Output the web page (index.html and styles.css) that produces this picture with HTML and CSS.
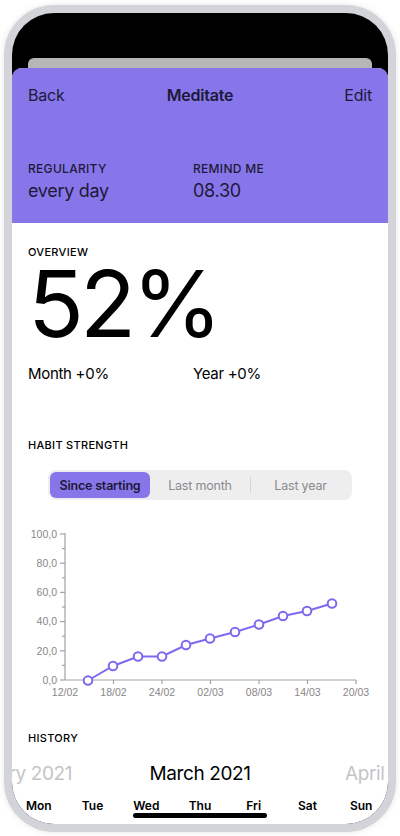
FILE: index.html
```html
<!DOCTYPE html>
<html lang="en">
    <head>
        <meta charset="UTF-8">
        <title>Meditate</title>
        <link rel="stylesheet" href="styles.css">
    </head>
    <body>
        <div class="phone">
            <div class="screen">
                <div class="status-area">
                    <div class="back-card"></div>
                </div>

                <div class="sheet">
                    <div class="header">
                        <div class="nav">
                            <span class="nav-left">Back</span>
                            <span class="nav-title">Meditate</span>
                            <span class="nav-right">Edit</span>
                        </div>
                        <div class="meta">
                            <div>
                                <p class="label">REGULARITY</p>
                                <p class="meta-value">every day</p>
                            </div>
                            <div>
                                <p class="label">REMIND ME</p>
                                <p class="meta-value">08.30</p>
                            </div>
                        </div>
                    </div>

                    <div class="section overview">
                        <p class="label">OVERVIEW</p>
                        <p class="big-number">52%</p>
                        <div class="stats">
                            <span>Month +0%</span>
                            <span>Year +0%</span>
                        </div>
                    </div>

                    <div class="section strength">
                        <p class="label">HABIT STRENGTH</p>
                        <div class="segmented">
                            <span class="segment selected">Since starting</span>
                            <span class="segment">Last month</span>
                            <span class="segment divided">Last year</span>
                        </div>
                    </div>

                    <svg class="chart" viewBox="0 0 376 175" width="376" height="175">
                        <g stroke="#a3a3a3" stroke-width="1.2" fill="none">
                            <line x1="53" y1="9" x2="53" y2="156"/>
                            <line x1="53" y1="156" x2="344" y2="156"/>
                            <line x1="48" y1="10" x2="53" y2="10"/>
                            <line x1="48" y1="39.2" x2="53" y2="39.2"/>
                            <line x1="48" y1="68.4" x2="53" y2="68.4"/>
                            <line x1="48" y1="97.6" x2="53" y2="97.6"/>
                            <line x1="48" y1="126.8" x2="53" y2="126.8"/>
                            <line x1="48" y1="156" x2="53" y2="156"/>
                            <line x1="50" y1="24.6" x2="53" y2="24.6"/>
                            <line x1="50" y1="53.8" x2="53" y2="53.8"/>
                            <line x1="50" y1="83" x2="53" y2="83"/>
                            <line x1="50" y1="112.2" x2="53" y2="112.2"/>
                            <line x1="50" y1="141.4" x2="53" y2="141.4"/>
                            <line x1="101.5" y1="156" x2="101.5" y2="160"/>
                            <line x1="150" y1="156" x2="150" y2="160"/>
                            <line x1="198.5" y1="156" x2="198.5" y2="160"/>
                            <line x1="247" y1="156" x2="247" y2="160"/>
                            <line x1="295.5" y1="156" x2="295.5" y2="160"/>
                            <line x1="344" y1="156" x2="344" y2="160"/>
                        </g>
                        <g class="axis-text" text-anchor="end">
                            <text x="45" y="13.8">100,0</text>
                            <text x="45" y="43">80,0</text>
                            <text x="45" y="72.2">60,0</text>
                            <text x="45" y="101.4">40,0</text>
                            <text x="45" y="130.6">20,0</text>
                            <text x="45" y="159.8">0,0</text>
                        </g>
                        <g class="axis-text" text-anchor="middle">
                            <text x="53" y="171.5">12/02</text>
                            <text x="101.5" y="171.5">18/02</text>
                            <text x="150" y="171.5">24/02</text>
                            <text x="198.5" y="171.5">02/03</text>
                            <text x="247" y="171.5">08/03</text>
                            <text x="295.5" y="171.5">14/03</text>
                            <text x="344" y="171.5">20/03</text>
                        </g>
                        <polyline fill="none" stroke="#7d69ee" stroke-width="2"
                            points="76,156.5 101,142 126,132.5 150,132.5 174,121 198,114.5 223,108 247,100.5 271,92 295,87 320,79.5"/>
                        <g fill="#fff" stroke="#7d69ee" stroke-width="2">
                            <circle cx="76" cy="156.5" r="4.3"/>
                            <circle cx="101" cy="142" r="4.3"/>
                            <circle cx="126" cy="132.5" r="4.3"/>
                            <circle cx="150" cy="132.5" r="4.3"/>
                            <circle cx="174" cy="121" r="4.3"/>
                            <circle cx="198" cy="114.5" r="4.3"/>
                            <circle cx="223" cy="108" r="4.3"/>
                            <circle cx="247" cy="100.5" r="4.3"/>
                            <circle cx="271" cy="92" r="4.3"/>
                            <circle cx="295" cy="87" r="4.3"/>
                            <circle cx="320" cy="79.5" r="4.3"/>
                        </g>
                    </svg>

                    <div class="section history">
                        <p class="label">HISTORY</p>
                    </div>

                    <div class="months">
                        <div class="month-side prev"><span>February 2021</span></div>
                        <div class="month-current">March 2021</div>
                        <div class="month-side next"><span>April 2021</span></div>
                    </div>

                    <div class="weekdays">
                        <span>Mon</span>
                        <span>Tue</span>
                        <span>Wed</span>
                        <span>Thu</span>
                        <span>Fri</span>
                        <span>Sat</span>
                        <span>Sun</span>
                    </div>
                </div>

                <div class="home-indicator"></div>
            </div>
        </div>
    </body>
</html>
```

FILE: styles.css
```css
* {
    margin: 0; padding: 0; box-sizing: border-box;
}

html, body {
    width: 100%;
    height: 100%;
    background-color: #fff;
    font-family: Inter, "Liberation Sans", sans-serif;
    color: #000;
    overflow: hidden;
}

.phone {
    width: 392px;
    height: 827px;
    margin: 5px 4px 0;
    padding: 8px;
    border-radius: 50px;
    background-color: #d3d4da;
    box-shadow: 0 0 6px rgba(0, 0, 0, 0.10);
}

.screen {
    position: relative;
    height: 100%;
    border-radius: 42px;
    background-color: #000;
    overflow: hidden;
    display: flex;
    flex-direction: column;
}

.status-area {
    height: 55px;
    padding: 45px 16px 0;
}

.back-card {
    height: 10px;
    background-color: #b6b6b6;
    border-radius: 6px 6px 0 0;
}

.sheet {
    flex: 1;
    background-color: #fff;
    border-radius: 10px 10px 0 0;
    overflow: hidden;
}

.header {
    height: 155px;
    padding: 0 16px;
    background-color: #8776ea;
    color: #1d1939;
}

.nav {
    display: grid;
    grid-template-columns: 1fr auto 1fr;
    padding-top: 17px;
    font-size: 16px;
    line-height: 20px;
    letter-spacing: -0.2px;
}

.nav-title {
    font-weight: 600;
}

.nav-right {
    text-align: right;
}

.meta {
    display: grid;
    grid-template-columns: 165px 1fr;
    margin-top: 57px;
}

.label {
    font-size: 11px;
    line-height: 13px;
    font-weight: 500;
    letter-spacing: 0.3px;
}

.header .label {
    font-size: 12px;
    line-height: 14px;
}

.meta-value {
    margin-top: 3px;
    font-size: 18px;
    line-height: 23px;
    letter-spacing: -0.3px;
}

.section {
    padding: 0 16px;
}

.overview {
    padding-top: 23px;
}

.big-number {
    margin-top: 5px;
    font-size: 92px;
    line-height: 80px;
    letter-spacing: -4px;
}

.stats {
    display: grid;
    grid-template-columns: 165px 1fr;
    margin-top: 21px;
    font-size: 15px;
    line-height: 18px;
    letter-spacing: -0.3px;
}

.strength {
    padding-top: 56px;
}

.segmented {
    display: grid;
    grid-template-columns: repeat(3, 1fr);
    width: 304px;
    height: 30px;
    margin: 18px 0 0 20px;
    padding: 2px;
    border-radius: 8px;
    background-color: #eeeeef;
}

.segment {
    display: flex;
    align-items: center;
    justify-content: center;
    font-size: 12.5px;
    letter-spacing: -0.2px;
    color: #8a8a8e;
}

.segment.selected {
    background-color: #8776ea;
    border-radius: 6px;
    color: #1d1939;
    font-weight: 600;
}

.segment.divided {
    border-left: 1px solid #d6d6d8;
    margin: 5px 0;
}

.chart {
    display: block;
    margin-top: 24px;
}

.axis-text text {
    font-family: "Liberation Sans", sans-serif;
    font-size: 10.5px;
    fill: #878787;
}

.history {
    padding-top: 33px;
}

.months {
    display: flex;
    margin-top: 17px;
    font-size: 19px;
    line-height: 23px;
    letter-spacing: -0.4px;
    white-space: nowrap;
}

.month-side {
    display: flex;
    overflow: hidden;
    color: #c4c4c7;
}

.month-side span {
    flex-shrink: 0;
}

.prev {
    width: 60px;
    justify-content: flex-end;
}

.month-current {
    flex: 1;
    padding-right: 17px;
    text-align: center;
}

.next {
    width: 43px;
}

.weekdays {
    display: grid;
    grid-template-columns: repeat(7, 1fr);
    margin-top: 14px;
    font-size: 12px;
    line-height: 14px;
    font-weight: 600;
    text-align: center;
}

.home-indicator {
    position: absolute;
    left: 121px;
    bottom: 6px;
    width: 134px;
    height: 5px;
    border-radius: 3px;
    background-color: #000;
}
```
